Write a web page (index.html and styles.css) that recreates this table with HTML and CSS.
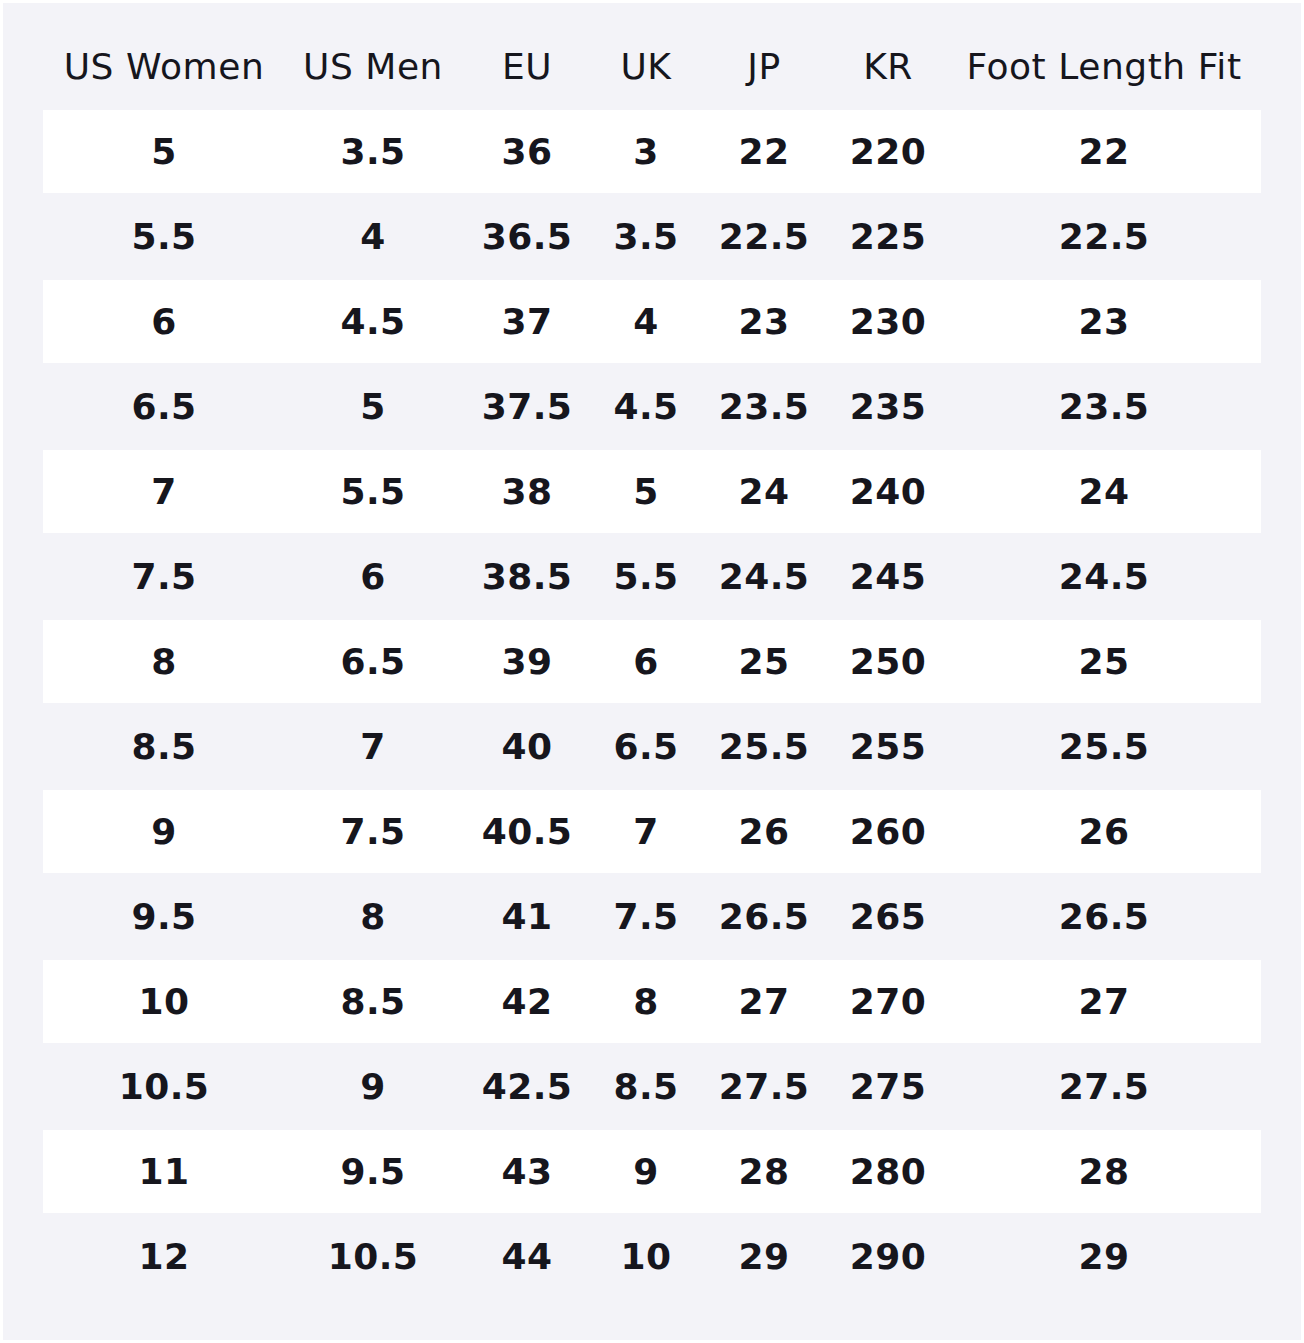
FILE: index.html
```html
<!DOCTYPE html>
<html>
<head>
<meta charset="utf-8">
<link rel="stylesheet" href="styles.css">
</head>
<body>
<div class="chart">
<table class="sizes">
<colgroup>
<col class="c1"><col class="c2"><col class="c3"><col class="c4"><col class="c5"><col class="c6"><col class="c7">
</colgroup>
<thead>
<tr><th>US Women</th><th>US Men</th><th>EU</th><th>UK</th><th>JP</th><th>KR</th><th>Foot Length Fit</th></tr>
</thead>
<tbody>
<tr><td>5</td><td>3.5</td><td>36</td><td>3</td><td>22</td><td>220</td><td>22</td></tr>
<tr><td>5.5</td><td>4</td><td>36.5</td><td>3.5</td><td>22.5</td><td>225</td><td>22.5</td></tr>
<tr><td>6</td><td>4.5</td><td>37</td><td>4</td><td>23</td><td>230</td><td>23</td></tr>
<tr><td>6.5</td><td>5</td><td>37.5</td><td>4.5</td><td>23.5</td><td>235</td><td>23.5</td></tr>
<tr><td>7</td><td>5.5</td><td>38</td><td>5</td><td>24</td><td>240</td><td>24</td></tr>
<tr><td>7.5</td><td>6</td><td>38.5</td><td>5.5</td><td>24.5</td><td>245</td><td>24.5</td></tr>
<tr><td>8</td><td>6.5</td><td>39</td><td>6</td><td>25</td><td>250</td><td>25</td></tr>
<tr><td>8.5</td><td>7</td><td>40</td><td>6.5</td><td>25.5</td><td>255</td><td>25.5</td></tr>
<tr><td>9</td><td>7.5</td><td>40.5</td><td>7</td><td>26</td><td>260</td><td>26</td></tr>
<tr><td>9.5</td><td>8</td><td>41</td><td>7.5</td><td>26.5</td><td>265</td><td>26.5</td></tr>
<tr><td>10</td><td>8.5</td><td>42</td><td>8</td><td>27</td><td>270</td><td>27</td></tr>
<tr><td>10.5</td><td>9</td><td>42.5</td><td>8.5</td><td>27.5</td><td>275</td><td>27.5</td></tr>
<tr><td>11</td><td>9.5</td><td>43</td><td>9</td><td>28</td><td>280</td><td>28</td></tr>
<tr><td>12</td><td>10.5</td><td>44</td><td>10</td><td>29</td><td>290</td><td>29</td></tr>
</tbody>
</table>
</div>
</body>
</html>
```
FILE: styles.css
```css
html, body {
  margin: 0;
  padding: 0;
  background: #ffffff;
}
body {
  padding: 3px;
  font-family: "DejaVu Sans", sans-serif;
  color: #16161d;
}
.chart {
  background: #f3f3f8;
  padding: 40px;
  width: 1218px;
  height: 1257px;
}
.sizes {
  border-collapse: collapse;
  table-layout: fixed;
  width: 1218px;
}
.c1 { width: 242px; }
.c2 { width: 176px; }
.c3 { width: 132px; }
.c4 { width: 106px; }
.c5 { width: 130px; }
.c6 { width: 118px; }
.c7 { width: 314px; }
.sizes th {
  font-weight: normal;
  font-size: 36px;
  line-height: 42px;
  height: 67px;
  padding: 3px 0 22px;
  box-sizing: border-box;
  vertical-align: top;
  text-align: center;
  letter-spacing: 0.55px;
  white-space: nowrap;
}
.sizes td {
  font-weight: bold;
  font-size: 36px;
  line-height: 42px;
  padding: 0;
  box-sizing: border-box;
  text-align: center;
  vertical-align: middle;
  letter-spacing: 0.45px;
  white-space: nowrap;
}
.sizes tbody tr:nth-child(odd) td {
  background: #ffffff;
  height: 83px;
}
.sizes tbody tr:nth-child(even) td {
  height: 87px;
}
```
